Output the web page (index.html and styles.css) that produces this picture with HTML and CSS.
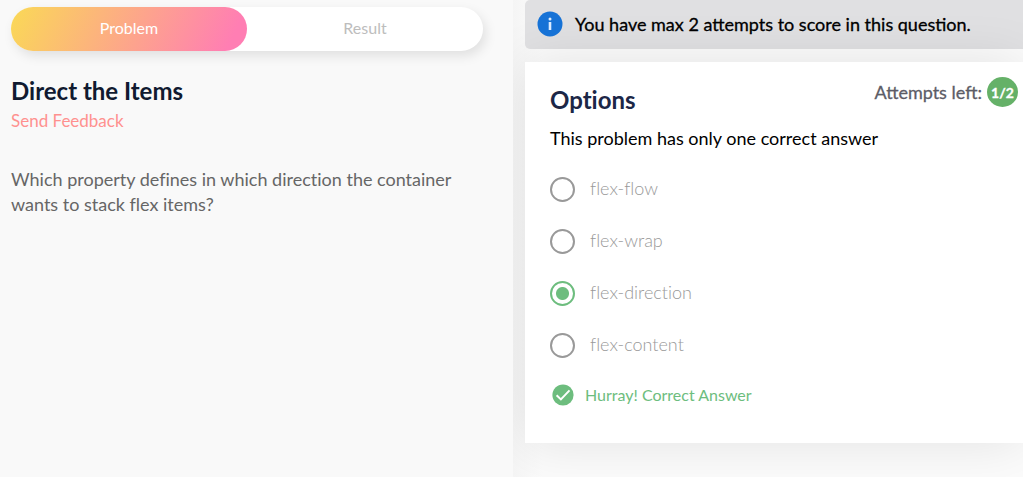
FILE: index.html
```html
<!DOCTYPE html>
<html lang="en">
<head>
<meta charset="utf-8">
<meta name="viewport" content="width=device-width, initial-scale=1">
<title>Direct the Items</title>
<link rel="stylesheet" href="styles.css">
</head>
<body>
<main class="page">
  <section class="problem">
    <div class="tabs" role="tablist">
      <button class="tab tab-active" type="button" role="tab" aria-selected="true">Problem</button>
      <button class="tab" type="button" role="tab" aria-selected="false">Result</button>
    </div>
    <h1 class="title">Direct the Items</h1>
    <a class="feedback" href="#">Send Feedback</a>
    <p class="question">Which property defines in which direction the container wants to stack flex items?</p>
  </section>
  <section class="answer">
    <div class="notice">
      <svg class="notice-icon" viewBox="0 0 26 26" aria-hidden="true"><circle cx="13" cy="13" r="12.5" fill="#1672d6"/><circle cx="13" cy="8" r="1.5" fill="#dcecff"/><path d="M13 11v8" stroke="#dcecff" stroke-width="2.6"/></svg>
      <span>You have max 2 attempts to score in this question.</span>
    </div>
    <form class="card">
      <div class="card-head">
        <h2 class="card-title">Options</h2>
        <div class="attempts"><span>Attempts left:</span><span class="count">1/2</span></div>
      </div>
      <p class="hint">This problem has only one correct answer</p>
      <div class="options">
        <label class="option"><input class="radio" type="radio" name="answer"><span class="option-text">flex-flow</span></label>
        <label class="option"><input class="radio" type="radio" name="answer"><span class="option-text">flex-wrap</span></label>
        <label class="option"><input class="radio" type="radio" name="answer" checked><span class="option-text">flex-direction</span></label>
        <label class="option"><input class="radio" type="radio" name="answer"><span class="option-text">flex-content</span></label>
      </div>
      <div class="verdict">
        <svg class="verdict-icon" viewBox="0 0 22 22" aria-hidden="true"><circle cx="11" cy="11" r="10.6" fill="#6dbd7e"/><path d="M4.6 11.2l4.3 4.2 8.6-9" fill="none" stroke="#fff" stroke-width="2"/></svg>
        <span>Hurray! Correct Answer</span>
      </div>
    </form>
  </section>
</main>
</body>
</html>
```
FILE: styles.css
```css
* { box-sizing: border-box; }
body {
  margin: 0;
  background: #fbfbfb;
  font-family: Lato, "Open Sans", sans-serif;
  font-variant-ligatures: none;
  overflow-x: hidden;
}
h1, h2, p { margin: 0; }
.page {
  display: grid;
  grid-template-columns: 513fr 510fr;
  min-height: 100vh;
}
.problem {
  z-index: 1;
  padding: 7px 30px 20px 11px;
  background: #f9f9f9;
}
.tabs {
  display: flex;
  height: 44px;
  border-radius: 22px;
  background: #fff;
  box-shadow: 3px 5px 12px rgba(0, 0, 0, 0.1);
}
.tab {
  flex: 1;
  padding: 0 0 2px;
  border: 0;
  border-radius: 22px;
  background: transparent;
  color: #bdbdbd;
  font: 16px/20px Lato, "Open Sans", sans-serif;
}
.tab-active {
  background: linear-gradient(115deg, #fad956 0%, #ff7eb3 92%);
  color: #fff;
}
.title {
  margin-top: 25px;
  color: #101a30;
  font-size: 24px;
  line-height: 30px;
}
.feedback {
  display: inline-block;
  margin-top: 5px;
  color: #ff918f;
  font-size: 17px;
  line-height: 20px;
  text-decoration: none;
}
.question {
  margin-top: 36px;
  color: #666;
  font-size: 18px;
  line-height: 25px;
}
.answer {
  padding-left: 12px;
  background: linear-gradient(90deg, #f5f5f5, #fbfbfb 30px);
}
.notice {
  display: flex;
  align-items: center;
  gap: 12px;
  height: 49px;
  padding: 0 0 2px 12px;
  border-radius: 5px 0 0 5px;
  background: #e0e0e2;
  color: #000;
  font-size: 18px;
  font-variant-ligatures: normal;
  -webkit-text-stroke: 0.3px;
}
.notice-icon { flex: none; width: 26px; height: 26px; }
.card {
  margin-top: 13px;
  padding: 15px 5px 37px 25px;
  background: #fff;
  box-shadow: 0 0 50px rgba(0, 0, 0, 0.1);
}
.card-head { display: flex; justify-content: space-between; }
.card-title {
  margin-top: 8px;
  color: #1c2747;
  font-size: 24px;
  line-height: 30px;
}
.attempts {
  display: flex;
  align-items: center;
  gap: 5px;
  height: 30px;
  color: #5c5c66;
  font-size: 18px;
  font-variant-ligatures: normal;
  -webkit-text-stroke: 0.3px;
}
.count {
  display: grid;
  place-items: center;
  width: 31px;
  height: 30px;
  border-radius: 50%;
  background: #65b168;
  color: #fff;
  font-size: 14px;
  font-weight: 700;
}
.hint {
  margin-top: 11px;
  color: #000;
  font-size: 18px;
  line-height: 24px;
}
.options {
  display: grid;
  gap: 27px;
  margin-top: 27px;
}
.option {
  display: flex;
  align-items: center;
  gap: 15px;
  color: #999;
  font-size: 18px;
  font-weight: 300;
  line-height: 22px;
}
.option-text { padding-bottom: 3px; }
.radio {
  appearance: none;
  flex: none;
  width: 25px;
  height: 25px;
  margin: 0;
  border: 2px solid #999;
  border-radius: 50%;
}
.radio:checked {
  border-color: #6dbd7e;
  background: radial-gradient(circle, #6dbd7e 6px, transparent 7px);
}
.verdict {
  display: flex;
  align-items: center;
  gap: 11px;
  margin-top: 26px;
  padding-left: 2px;
  color: #6dbd7e;
  font-size: 16px;
  line-height: 22px;
}
.verdict-icon { flex: none; width: 22px; height: 22px; }
```
